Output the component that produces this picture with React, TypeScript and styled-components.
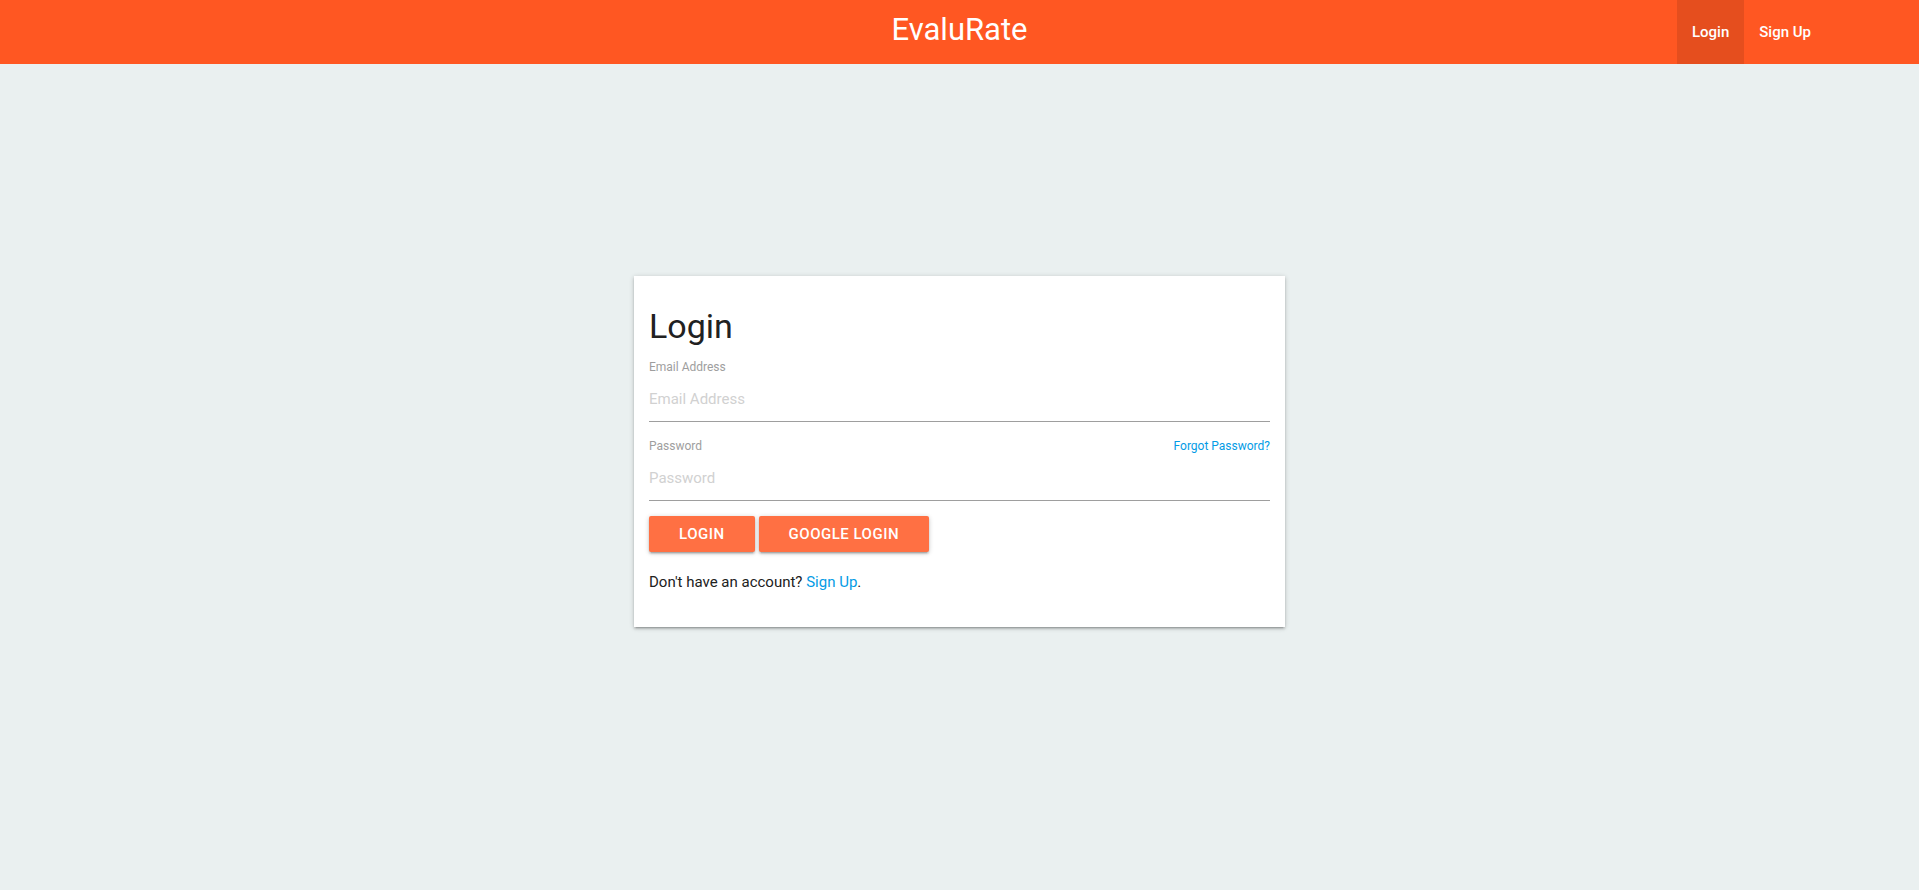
import React from "react";
import styled, { createGlobalStyle } from "styled-components";

const GlobalStyle = createGlobalStyle`
  html, body { margin: 0; padding: 0; }
  body {
    background: #eaf0f0;
    font-family: Roboto, "Liberation Sans", sans-serif;
    color: rgba(0, 0, 0, 0.87);
    min-height: 890px;
  }
  * { box-sizing: border-box; }
`;

const Nav = styled.nav`
  height: 64px;
  background: #ff5722;
  display: grid;
  grid-template-columns: 1fr auto 1fr;
  align-items: stretch;
  color: #fff;
`;

const Brand = styled.a`
  grid-column: 2;
  font-size: 31px;
  line-height: 60px;
  color: #fff;
  text-decoration: none;
`;

const NavLinks = styled.ul`
  grid-column: 3;
  justify-self: end;
  display: flex;
  margin: 0;
  padding: 0 93px 0 0;
  list-style: none;
`;

const NavLink = styled.a<{ $active?: boolean }>`
  display: block;
  padding: 0 15px;
  font-size: 15px;
  font-weight: 500;
  line-height: 64px;
  color: #fff;
  text-decoration: none;
  background: ${(p) => (p.$active ? "rgba(0,0,0,0.1)" : "transparent")};
`;

const Main = styled.main`
  display: flex;
  justify-content: center;
  padding-top: 212px;
`;

const Card = styled.div`
  width: 651px;
  background: #fff;
  padding: 30px 15px 33px;
  box-shadow: 0 2px 2px 0 rgba(0, 0, 0, 0.14), 0 3px 1px -2px rgba(0, 0, 0, 0.12),
    0 1px 5px 0 rgba(0, 0, 0, 0.2);
`;

const Title = styled.h4`
  margin: 0 0 14px;
  font-size: 34px;
  line-height: 40px;
  font-weight: 400;
  color: #212121;
`;

const Field = styled.div<{ $gap?: number }>`
  display: flex;
  flex-direction: column;
  margin-top: ${(p) => p.$gap ?? 0}px;
`;

const LabelRow = styled.div`
  display: flex;
  justify-content: space-between;
  align-items: baseline;
  margin-bottom: 2px;
`;

const Label = styled.label`
  font-size: 12px;
  line-height: 14px;
  color: #9e9e9e;
`;

const SmallLink = styled.a`
  font-size: 12px;
  line-height: 14px;
  color: #039be5;
  text-decoration: none;
`;

const Input = styled.input`
  height: 46px;
  width: 100%;
  border: none;
  border-bottom: 1px solid #9e9e9e;
  outline: none;
  padding: 0;
  margin: 0;
  font-family: inherit;
  font-size: 15px;
  line-height: 45px;
  color: rgba(0, 0, 0, 0.87);
  background: transparent;
  &::placeholder { color: #d1d1d1; }
`;

const Buttons = styled.div`
  display: flex;
  gap: 4px;
  margin-top: 15px;
`;

const Button = styled.button`
  height: 36px;
  padding: 0 30px;
  border: none;
  border-radius: 2px;
  background: #ff7043;
  color: #fff;
  font-family: inherit;
  font-size: 15px;
  font-weight: 500;
  letter-spacing: 0.5px;
  text-transform: uppercase;
  cursor: pointer;
  box-shadow: 0 2px 2px 0 rgba(0, 0, 0, 0.14), 0 3px 1px -2px rgba(0, 0, 0, 0.12),
    0 1px 5px 0 rgba(0, 0, 0, 0.2);
`;

const Footer = styled.p`
  margin: 19px 0 0;
  font-size: 15px;
  line-height: 22.5px;
  color: #212121;
`;

const Link = styled.a`
  color: #039be5;
  text-decoration: none;
`;

export default function App() {
  return (
    <>
      <GlobalStyle />
      <Nav>
        <Brand href="#">EvaluRate</Brand>
        <NavLinks>
          <li>
            <NavLink href="#" $active>Login</NavLink>
          </li>
          <li>
            <NavLink href="#">Sign Up</NavLink>
          </li>
        </NavLinks>
      </Nav>
      <Main>
        <Card>
          <Title>Login</Title>
          <Field>
            <LabelRow>
              <Label htmlFor="email">Email Address</Label>
            </LabelRow>
            <Input id="email" type="email" placeholder="Email Address" />
          </Field>
          <Field $gap={17}>
            <LabelRow>
              <Label htmlFor="password">Password</Label>
              <SmallLink href="#">Forgot Password?</SmallLink>
            </LabelRow>
            <Input id="password" type="password" placeholder="Password" />
          </Field>
          <Buttons>
            <Button>Login</Button>
            <Button>Google Login</Button>
          </Buttons>
          <Footer>
            Don't have an account? <Link href="#">Sign Up</Link>.
          </Footer>
        </Card>
      </Main>
    </>
  );
}
